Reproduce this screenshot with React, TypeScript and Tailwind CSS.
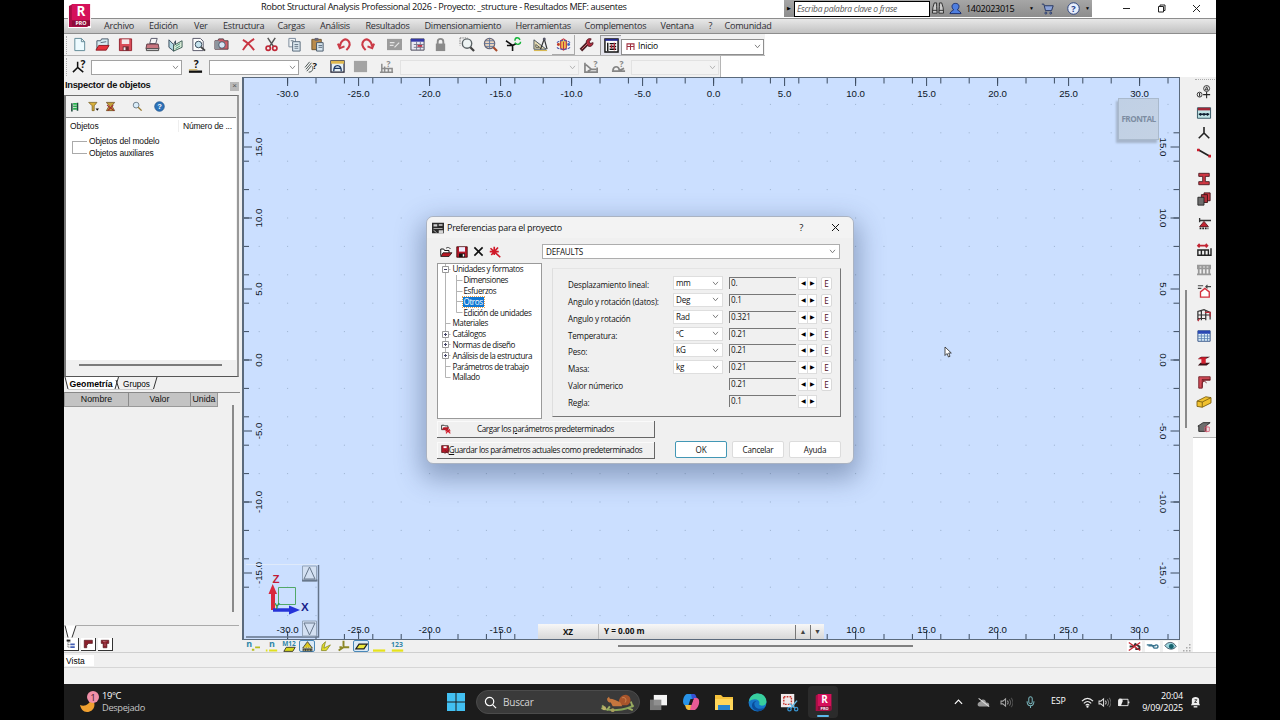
import type { ReactNode } from "react";
import clsx from "clsx";

const icons: Record<string, ReactNode> = {
  fresh: <path d="M3 1.500h7l3.500 3.500v9.500H3z M10 1.500v3.500h3.500" fill="#eefbff" stroke="#5e8795" />,
  open: (
    <>
      <path d="M2 13V4h4l1-2h7v8" fill="#d6ecf2" stroke="#456" />
      <path d="M1 14l3-5h11l-3 5z" fill="#e8323c" stroke="#8a1a22" />
      <path d="M6 6l6-1" stroke="#567" />
    </>
  ),
  save: (
    <>
      <path d="M1.500 2h13v12.500h-13z" fill="#d94c58" stroke="#93222e" />
      <path d="M4 2.500h8v5H4z" fill="#f3e8ea" />
      <path d="M5 10h6.500v4.500H5z" fill="#6d2b34" />
      <path d="M6 11h2v3H6z" fill="#eee" />
    </>
  ),
  print: (
    <>
      <path d="M5 7l1.500-5.500H13L11.500 7z" fill="#f6f6f6" stroke="#556" />
      <path d="M2 7.500h12l1 5H1z" fill="#c87680" stroke="#5b3a42" />
      <path d="M1.500 12.500h13v2h-13z" fill="#e9e3e5" stroke="#444" />
    </>
  ),
  book: (
    <>
      <path d="M1 3l5 5v7L1 11z" fill="#b6dbe6" stroke="#345" />
      <path d="M6 8l2-4v7l-2 4z" fill="#fff" stroke="#345" />
      <path d="M6 15V9l9-5v7z" fill="#e3f2dd" stroke="#365a52" />
      <path d="M8 10l5-3M8 12.500l5-3" stroke="#3a8a74" />
    </>
  ),
  preview: (
    <>
      <path d="M2 1.500h8l3 3v10H2z" fill="#fdfdfd" stroke="#556" />
      <circle cx="8" cy="8" r="3.500" fill="#c6e3ee" stroke="#345" />
      <path d="M10.500 10.500L15 14.500" stroke="#444" strokeWidth="2" />
    </>
  ),
  camera: (
    <>
      <path d="M1 4h3l1-2h5l1 2h4v9H1z" fill="#ce5c65" stroke="#55404a" />
      <path d="M1 4h5v9H1z" fill="#8f959e" />
      <circle cx="8.500" cy="8.500" r="3.500" fill="#d6e5f4" stroke="#456" />
    </>
  ),
  cross: <path d="M2 3c4 2 9 7 12 11M14 2C9 5 5 9 2 14" stroke="#c93643" strokeWidth="2" fill="none" />,
  cut: (
    <>
      <path d="M4 1l6 9M12 1L6 10" stroke="#555" strokeWidth="1.600" />
      <circle cx="4.500" cy="12" r="2.300" fill="none" stroke="#c02838" strokeWidth="1.800" />
      <circle cx="11.500" cy="12" r="2.300" fill="none" stroke="#c02838" strokeWidth="1.800" />
    </>
  ),
  copy: (
    <>
      <path d="M2 1.500h7v9H2z" fill="#f1f4f6" stroke="#789" />
      <path d="M6 5h8v10H6z" fill="#dce8f0" stroke="#567" />
      <path d="M8 8h4M8 10h4M8 12h4M4 4h3" stroke="#678" />
    </>
  ),
  paste: (
    <>
      <path d="M2 2.500h10v11H2z" fill="#b98b4c" stroke="#6b532f" />
      <path d="M5 1h4v3H5z" fill="#667" />
      <path d="M7 6h7v9H7z" fill="#d8e6f0" stroke="#456" />
      <path d="M9 9h4M9 11h4" stroke="#567" />
    </>
  ),
  undo: <path d="M3 10C4 3 9 1 12 4c3 3 1 7-2 10M1 7l2 5 5-2" stroke="#cb3b47" strokeWidth="2.200" fill="none" />,
  redo: <path d="M13 10C12 3 7 1 4 4c-3 3-1 7 2 10M15 7l-2 5-5-2" stroke="#cb3b47" strokeWidth="2.200" fill="none" />,
  grayPage: (
    <>
      <path d="M0 2h16v12H0z" fill="#9c9c9c" />
      <path d="M3 6h5M3 9h4M8 11l5-5" stroke="#e5e5e5" strokeWidth="1.300" />
    </>
  ),
  calc: (
    <>
      <path d="M1 2h14v12H1z" fill="#e9e9f2" stroke="#445" />
      <path d="M1 2h14v3H1z" fill="#3438a8" />
      <path d="M4 8h11M4 11h11M7 5v9M11 5v9" stroke="#77778e" />
      <path d="M8 8.500h5v2H8z" fill="#c0344a" />
    </>
  ),
  lock: (
    <>
      <path d="M5 8V5c0-4 6-4 6 0v3" fill="none" stroke="#8b8b8b" strokeWidth="2" />
      <path d="M3 7h10v8H3z" fill="#8b8b8b" />
    </>
  ),
  lens: (
    <>
      <path d="M0 1h8M0 1v8" stroke="#777" strokeDasharray="1.500 1" />
      <circle cx="7.500" cy="7" r="5" fill="#eef4f4" stroke="#5b6366" strokeWidth="1.500" />
      <path d="M11 11l4 4" stroke="#444" strokeWidth="2.400" />
    </>
  ),
  globe: (
    <>
      <circle cx="7" cy="7" r="5.500" fill="#efd7bf" stroke="#667" strokeWidth="1.300" />
      <path d="M1.500 7h11M7 1.500v11M3 4h8M3 10h8" stroke="#6077a0" />
      <path d="M11 11l4 4" stroke="#a84b2c" strokeWidth="2.200" />
    </>
  ),
  axes: (
    <>
      <path d="M7 15V9M7 9L0 4M7 9H1M7 9l4-2" stroke="#111" strokeWidth="1.700" fill="none" />
      <path d="M9.500 4c0-4 4-4 5.500-1M15.500 5c0 3-4 4-6 1" stroke="#16b53a" strokeWidth="1.500" fill="none" />
    </>
  ),
  design: (
    <>
      <path d="M1 3v10h13z" fill="#e9ddb4" stroke="#44505a" />
      <path d="M3 8v3h4z" fill="#f6f6f6" stroke="#554" />
      <path d="M12 2L8 13M12 2l3 11" stroke="#333" strokeWidth="1.300" />
      <circle cx="12" cy="2" r="1.600" fill="#556" />
      <path d="M1 14h14v1H1z" fill="#d4b13c" />
    </>
  ),
  views: (
    <>
      <circle cx="8" cy="8" r="4.500" fill="#f2c84e" />
      <path d="M5 4l3-2 3 2v8l-3 2-3-2zM8 5v9" stroke="#c03540" strokeWidth="1.200" fill="none" />
      <path d="M1 6c3-3 11-3 14 0M1 11c3 3 11 3 14 0" stroke="#4a52a8" strokeWidth="1.200" strokeDasharray="3 1" fill="none" />
      <circle cx="2.500" cy="8" r="1.500" fill="#c0392b" />
      <circle cx="13.500" cy="8" r="1.500" fill="#3b68c7" />
    </>
  ),
  wrench: (
    <>
      <path d="M2 14L10 6" stroke="#4d2026" strokeWidth="4" />
      <path d="M8 7c-1-4 2-6 5-5l-2 3 1 2 3-1c0 4-4 5-6 3z" fill="#b22a3b" stroke="#571e28" />
      <path d="M3 13l6-6" stroke="#d76d77" />
    </>
  ),
  inspector: (
    <>
      <path d="M1 1h14v14H1z" fill="#fff" stroke="#111" strokeWidth="1.500" />
      <path d="M1 1h14v2H1z" fill="#22268c" />
      <path d="M4 5v9M6 6h7M6 9h7M6 12h7" stroke="#111" strokeWidth="1.500" />
      <path d="M8 7v4M11 5v8" stroke="#b22a3b" strokeWidth="1.500" />
    </>
  ),
  nodeAsk: (
    <>
      <path d="M6 3v6M6 9l-5 5M6 9l6 5" stroke="#111" strokeWidth="1.600" />
      <text x="9" y="10" fontSize="11" fontWeight="700" fill="#111">?</text>
    </>
  ),
  barAsk: (
    <>
      <path d="M1 13.500h14" stroke="#111" strokeWidth="2.500" />
      <path d="M1 11.500h9" stroke="#c9a23a" />
      <text x="6" y="10" fontSize="11" fontWeight="700" fill="#111">?</text>
    </>
  ),
  handAsk: (
    <>
      <path d="M1 9l5-6M2 11l6-7M3 13l5-6M5 14c4 0 5-3 4-6" stroke="#3f4b49" fill="none" />
      <text x="9" y="11" fontSize="10" fontWeight="700" fill="#111">?</text>
    </>
  ),
  frameBox: (
    <>
      <path d="M1 2h14v12H1z" fill="#e6f0f5" stroke="#223" strokeWidth="1.300" />
      <path d="M1 2h14v3H1z" fill="#e0b84e" />
      <path d="M4 13c0-8 8-8 8 0M4 10h8" fill="none" stroke="#1d3864" strokeWidth="1.400" />
    </>
  ),
  grayBox: <path d="M1 2h14v12H1z" fill="#a3a3a3" />,
  loadAsk: (
    <>
      <path d="M1 14h14M3 5v9M6 8v6M3 10h11v4M10 10v4" stroke="#8c8c8c" strokeWidth="1.600" fill="none" />
      <text x="8" y="8" fontSize="9" fontWeight="700" fill="#8c8c8c">?</text>
    </>
  ),
  caseAsk: (
    <>
      <path d="M1 4v10h13V9M2 6l6 5h5M4 13l4-2" stroke="#858585" strokeWidth="1.800" fill="none" />
      <text x="10" y="8" fontSize="9" fontWeight="700" fill="#858585">?</text>
    </>
  ),
  archAsk: (
    <>
      <path d="M1 13h14M2 12c1-5 6-5 7 0M9 12l5-2" stroke="#858585" strokeWidth="1.800" fill="none" />
      <text x="9" y="8" fontSize="9" fontWeight="700" fill="#858585">?</text>
    </>
  ),
  bars: (
    <>
      <path d="M3 2v13M12 1v13" stroke="#1d4a3c" strokeWidth="2.500" />
      <path d="M5 3h6M5 7h6M5 11h6" stroke="#25b04b" strokeWidth="2.500" />
    </>
  ),
  filter: (
    <>
      <path d="M1 2h12l-4 5v7H6V7z" fill="#d7b03c" stroke="#6c5316" />
      <path d="M11 11h5l-2.500 3z" fill="#111" />
    </>
  ),
  filterOff: (
    <>
      <path d="M2 2h12l-4 5 4 7H2l4-7z" fill="#c7a13a" stroke="#5d4114" />
      <path d="M3 6l10 8M12 6L4 14" stroke="#a02530" strokeWidth="1.500" />
    </>
  ),
  find: (
    <>
      <circle cx="6" cy="6" r="4.200" fill="#d9ecf8" stroke="#667785" strokeWidth="1.300" />
      <path d="M9 9l5 5" stroke="#9a7a30" strokeWidth="2" />
    </>
  ),
  info: (
    <>
      <circle cx="8" cy="8" r="7" fill="#2d73ba" stroke="#1f4f85" />
      <text x="8" y="12" fontSize="11" fontWeight="700" textAnchor="middle" fill="#fff">?</text>
    </>
  ),
  tree: (
    <>
      <path d="M3 1v12M3 5h4M3 9h4M3 13h4" stroke="#333" strokeDasharray="1.500 1" />
      <path d="M7 7h7v3H7zM7 11.500h7v3H7z" fill="#4560b5" />
      <path d="M1 1h6v3H1z" fill="#222" />
    </>
  ),
  flag: <path d="M2 2h13v5H9l-3 3v4H2z" fill="#8a1f2b" stroke="#4c1118" />,
  section: (
    <>
      <path d="M2 2h12v5h-3v7H5V7H2z" fill="#8a1f2b" stroke="#4c1118" />
      <path d="M5 4h6M8 6v5" stroke="#eac5c8" strokeDasharray="1 1" />
    </>
  ),
  axisNum: (
    <>
      <circle cx="3" cy="11" r="2.800" fill="none" stroke="#222" />
      <path d="M3 9v4M11 8v7M7 11h8" stroke="#222" strokeWidth="1.200" />
      <circle cx="11" cy="4" r="3.400" fill="none" stroke="#222" />
      <path d="M9.500 5.500L11 2l1.500 3.500z" stroke="#222" fill="none" />
    </>
  ),
  storey: (
    <>
      <path d="M.5 2h15v12H.5z" fill="#bfe4e6" stroke="#264a58" />
      <path d="M1 2h14v3H1z" fill="#a22636" />
      <path d="M2 9.500h12M4 8v3M8 8v3M12 8v3" stroke="#123" strokeWidth="1.600" />
    </>
  ),
  node: <path d="M8 1v7M8 8l-6 6M8 8l6 6" stroke="#222" strokeWidth="1.800" fill="none" />,
  bar: (
    <>
      <path d="M1 4l14 8" stroke="#222" strokeWidth="2" />
      <path d="M0 3h3v3H0zM13 10h3v3h-3z" fill="#d01c2c" />
    </>
  ),
  ibeam: <path d="M2 1.500h12v3.500H9.500v6H14v3.500H2V11h4.500V5H2z" fill="#cf3743" stroke="#4a1c22" />,
  solids: (
    <>
      <path d="M8 1h7v9H8z" fill="#cf3743" stroke="#3c1015" />
      <path d="M5 3h7v9H5z" fill="#b02e3a" stroke="#3c1015" />
      <path d="M1 6h7v9H1z" fill="#6d6d6d" stroke="#222" />
    </>
  ),
  support: (
    <>
      <path d="M3 4h13M3 1v5" stroke="#333" strokeWidth="1.500" />
      <path d="M8 5l5 6H3z" fill="#c22432" stroke="#58131b" />
      <path d="M3 13h10" stroke="#222" strokeWidth="2" strokeDasharray="2 1" />
    </>
  ),
  loads: (
    <>
      <path d="M1 3h11M3 1L1 3l2 2M10 1l2 2-2 2" stroke="#c22432" strokeWidth="1.800" />
      <path d="M1 8h12v6H1zM5 8v6M9 8v6M1 14h15V6" fill="none" stroke="#222" strokeWidth="1.600" />
    </>
  ),
  grayLoads: <path d="M1 3h14v3H1zM2 3v9M6 3v9M10 3v9M14 3v9M0 13h16" fill="none" stroke="#999" strokeWidth="2" />,
  wind: (
    <>
      <path d="M4 15V9l5-4 5 4v6z" fill="#fff" stroke="#d3303d" strokeWidth="1.500" />
      <path d="M1 2h6M1 5h4M10 3h6M12 1l-2 2 2 2" stroke="#444" strokeWidth="1.200" fill="none" />
    </>
  ),
  frames: (
    <>
      <path d="M1 14V4l7-2 7 3v8M1 8h14M1 12h9M5 3v11M10 3v11" stroke="#333" strokeWidth="1.400" fill="none" />
      <path d="M9 5h6v5M1 15l2-3" stroke="#bb2b38" strokeWidth="1.400" fill="none" />
    </>
  ),
  table: (
    <>
      <path d="M1 2h14v12H1z" fill="#dff1fb" stroke="#25467b" />
      <path d="M1 2h14v3.500H1z" fill="#2a49b5" />
      <path d="M1 8h14M1 11h14M5 5v9M8.500 5v9M12 5v9" stroke="#5b83b5" />
    </>
  ),
  steel: (
    <>
      <path d="M1 5l4-2h10l-4 2zM1 13l3-3h11l-4 3z" fill="#3c1218" />
      <path d="M5 4h5v7H5z" fill="#d3202f" />
      <path d="M1 6l3-2h8l-3 2z" fill="#c91c2b" />
    </>
  ),
  joint: (
    <>
      <path d="M2 2h13v4H9L6 9v6H2z" fill="#d34c58" stroke="#6a1a22" />
      <path d="M6 5l5 4M6 5h9M6 5v9" stroke="#6a1a22" />
    </>
  ),
  timber: (
    <>
      <path d="M0 7l10-5 6 1v6L6 14l-6-1z" fill="#f0c12f" stroke="#7b5f10" />
      <path d="M0 7l6 1 10-5M6 8v6" stroke="#7b5f10" fill="none" />
    </>
  ),
  concrete: (
    <>
      <path d="M1 7l6-4h8l-5 4v6H2V7z" fill="#6e6e6e" stroke="#222" />
      <path d="M9 8h5v5H9zM11 6v8" stroke="#d25e74" fill="none" />
    </>
  ),
  nDash: (
    <>
      <text x="-1" y="9" fontSize="11" fontWeight="700" fill="#2f86a8">n</text>
      <path d="M6 12h3M10 9h6" stroke="#b8bd20" strokeWidth="2.200" />
    </>
  ),
  nBar: (
    <>
      <text x="5" y="9" fontSize="11" fontWeight="700" fill="#2f86a8">n</text>
      <path d="M1 13h2M5 13h10" stroke="#e0e020" strokeWidth="2.400" />
    </>
  ),
  plate: (
    <>
      <text x="-1" y="7" fontSize="8" fontWeight="700" fill="#2f86a8">M12</text>
      <path d="M4 9h11l-3 5H1z" fill="#d7d81c" stroke="#222" />
    </>
  ),
  cone: (
    <>
      <path d="M8 2l6 8H2z" fill="#d9c51f" stroke="#333" />
      <path d="M2 11h12v3H2z" fill="#333" />
      <path d="M4 9h8M3 12.500h10" stroke="#f5f09a" strokeDasharray="2 1" />
    </>
  ),
  leaf: <path d="M3 13l1-7 4-4-2 8 8-4-5 7z" fill="#e3de2b" stroke="#8a8a22" />,
  axis3: <path d="M8 1v8l-6 4M8 9h7M3 9h3" stroke="#8c8726" strokeWidth="2.400" fill="none" />,
  flat: <path d="M5 5h10l-4 6H1z" fill="#ece83a" stroke="#222" strokeWidth="1.500" />,
  yellowLine: <path d="M0 13h15" stroke="#e6e21c" strokeWidth="2.800" />,
  digits: (
    <>
      <text x="0" y="8" fontSize="8.500" fontWeight="700" fill="#2f86a8">123</text>
      <path d="M1 13h14" stroke="#e6e21c" strokeWidth="2.800" />
    </>
  ),
  hidden: (
    <>
      <path d="M2 8h5l2-3 5 3v3H9" stroke="#333" strokeWidth="2.400" fill="none" />
      <path d="M1 3l14 10M1 13L15 3" stroke="#c62835" strokeWidth="1.600" />
    </>
  ),
  glasses: <path d="M1 6h6l3 4h3a2 2 0 1 0-2-3H3" stroke="#3a7590" strokeWidth="1.800" fill="none" />,
  eye: (
    <>
      <path d="M1 7c4-6 11-5 14 1-3 4-9 5-14-1z" fill="#9ed6de" stroke="#345" />
      <circle cx="9" cy="8" r="3" fill="#17626e" />
    </>
  ),
  dlgOpen: (
    <>
      <path d="M1 13V4h4l1 2h6v3" fill="#fff" stroke="#111" strokeWidth="1.300" />
      <path d="M1 14l3-5h12l-4 5z" fill="#b51824" stroke="#111" />
      <path d="M8 3c2-2 5-1 6 1" stroke="#111" fill="none" />
    </>
  ),
  dlgSave: (
    <>
      <path d="M1 1h14v14H1z" fill="#b5182a" stroke="#300" />
      <path d="M4 1.500h8v6H4z" fill="#eef" />
      <path d="M4 10h8v5H4z" fill="#111" />
      <path d="M9 11h2v3H9z" fill="#fff" />
    </>
  ),
  dlgX: <path d="M2 2l12 12M14 2L2 14" stroke="#111" strokeWidth="2.400" />,
  dlgStar: <path d="M2 3l13 12M12 2L3 12M1 7.500h12M7 1v11" stroke="#d01828" strokeWidth="2.200" />,
  dlgLoad: (
    <>
      <path d="M1 9V2h4l1 1h5v6z" fill="#fff" stroke="#111" strokeWidth="1.300" />
      <path d="M1 9l3-4h9l-2 4z" fill="#b51824" />
      <path d="M7 8l8 7M14 8l-6 7M7 11h8" stroke="#d01828" strokeWidth="1.700" />
    </>
  ),
  dlgStore: (
    <>
      <path d="M1 1h11v11H1z" fill="#b5182a" stroke="#300" />
      <path d="M4 2h5v3H4z" fill="#fff" />
      <path d="M6 8l6 6M12 8l-6 6" stroke="#7a1420" strokeWidth="1.500" />
    </>
  ),
  dlgApp: (
    <>
      <path d="M0 1h16v14H0z" fill="#2b2b2b" />
      <path d="M2 3h5v3H2zM9 3h5v2H9zM2 8h12v1H2zM9 11h6v4H9z" fill="#d4d4d4" />
      <path d="M2 11l4 3" stroke="#ddd" />
    </>
  ),
};

function Icon({ name, className = "size-4" }: { name: string; className?: string }) {
  return (
    <svg viewBox="0 0 16 16" fill="none" className={clsx("shrink-0 overflow-visible", className)}>
      {icons[name]}
    </svg>
  );
}

function Chevron({ className }: { className?: string }) {
  return (
    <svg viewBox="0 0 8 6" className={clsx("w-[7px] h-[5px] shrink-0", className)} fill="none">
      <path d="M1 1l3 3.500L7 1" stroke="currentColor" strokeWidth="1" />
    </svg>
  );
}

function RobotLogo({ className }: { className?: string }) {
  return (
    <svg viewBox="0 0 24 26" className={className}>
      <path d="M1 3l4-2h18v21l-3 3H1z" fill="#a80f45" />
      <path d="M4 1h19v23H4z" fill="#d5115a" />
      <path d="M4 18h19v6H4z" fill="#8d0d3a" />
      <text x="13.500" y="14" fontSize="14" fontWeight="700" textAnchor="middle" fill="#fff">R</text>
      <text x="13.500" y="23.300" fontSize="5.500" fontWeight="700" textAnchor="middle" fill="#fff">PRO</text>
    </svg>
  );
}

const menus = [
  { label: "Archivo", width: "w-[45px]" },
  { label: "Edición", width: "w-[45px]" },
  { label: "Ver", width: "w-[29px]" },
  { label: "Estructura", width: "w-[54.500px]" },
  { label: "Cargas", width: "w-[42.500px]" },
  { label: "Análisis", width: "w-[45.500px]" },
  { label: "Resultados", width: "w-[59px]" },
  { label: "Dimensionamiento", width: "w-[91px]" },
  { label: "Herramientas", width: "w-[69px]" },
  { label: "Complementos", width: "w-[76px]" },
  { label: "Ventana", width: "w-[48px]" },
  { label: "?", width: "w-[16px]" },
  { label: "Comunidad", width: "w-[60px]" },
];

function TitleBar() {
  return (
    <header className="relative flex h-[18px] bg-white">
      <RobotLogo className="absolute left-[4px] top-[3px] z-10 w-[23px] h-[25px] bg-white" />
      <h1 className="w-[720px] pl-[197px] pt-px text-[9.200px] leading-[12px] tracking-[-0.350px] whitespace-nowrap text-[#111]">
        Robot Structural Analysis Professional 2026 - Proyecto: _structure - Resultados MEF: ausentes
      </h1>
      <div className="flex w-[308px] h-[17px] items-center bg-linear-to-b from-[#a6a6a6] to-[#8d8d8d]">
        <span className="w-[10px] pl-[3px] text-[5px]">▶</span>
        <div className="w-[136px] h-[16px] border border-black bg-white pl-[2px] text-[8.500px] leading-[13px] tracking-[-0.280px] italic text-[#555] whitespace-nowrap">
          Escriba palabra clave o frase
        </div>
        <svg viewBox="0 0 14 14" className="ml-px w-[14px] h-[13px]" fill="#ccc" stroke="#2a2a2a">
          <path d="M3 1h2.500v4L6 12H1l.5-6zM8.500 1H11l1.500 5 .5 6H8l.5-7zM1 9h5M8 9h5" />
        </svg>
        <svg viewBox="0 0 14 14" className="ml-[4px] w-[13px] h-[13px]" fill="#4f7fe0" stroke="#14296b">
          <path d="M1 12.500c1-3 3-3 4-4-3-3-2-7 2-7s5 4 2 7c1 1 3 1 4 4z" />
        </svg>
        <span className="ml-[4px] w-[60px] text-[9px] tracking-[-0.300px] text-black">1402023015</span>
        <span className="w-[20px] pl-[3px] text-[5px]">▼</span>
        <svg viewBox="0 0 16 14" className="-ml-[5px] w-[13px] h-[12px]" fill="#8ba2d8" stroke="#263561" strokeWidth="1.200">
          <path d="M1 1h2.500l2 8H13l2-6H4.500" />
          <circle cx="6" cy="12" r="1.200" />
          <circle cx="12" cy="12" r="1.200" />
        </svg>
        <svg viewBox="0 0 14 14" className="ml-[13px] w-[13px] h-[13px]">
          <circle cx="7" cy="7" r="6.200" fill="#e8eefb" stroke="#273f7c" />
          <text x="7" y="10.500" fontSize="10" fontWeight="700" textAnchor="middle" fill="#21418f">?</text>
        </svg>
        <span className="pl-[5px] text-[5px]">▼</span>
      </div>
      <svg viewBox="0 0 124 17" className="w-[124px] h-[17px]" fill="none" stroke="#222" strokeWidth="1">
        <path d="M31 8.500h7M101 5l7 7M108 5l-7 7" />
        <path d="M66.500 6.500h5v5.500h-5zM68 6.500V5h5v5.500h-1.500" />
      </svg>
    </header>
  );
}

function MenuBar() {
  return (
    <nav className="flex h-[16px] items-center border-y border-[#8d8d8d] bg-linear-to-b from-[#e8e8e8] to-[#c2c2c2] pl-[40px] text-[9.100px] leading-[14px] tracking-[-0.250px] text-[#2d2d33]">
      {menus.map((menu) => (
        <span key={menu.label} className={clsx("shrink-0 whitespace-nowrap", menu.width)}>
          {menu.label}
        </span>
      ))}
    </nav>
  );
}

const mainTools = [
  ["fresh", "open", "save"],
  ["print", "book", "preview", "camera"],
  ["cross", "cut", "copy", "paste"],
  ["undo", "redo"],
  ["grayPage", "calc", "lock"],
  ["lens", "globe", "axes"],
  ["design", "views", "wrench"],
];

function ToolCell({ name, className }: { name: string; className: string }) {
  return (
    <span className={clsx("flex shrink-0 items-center justify-center", className)}>
      <Icon name={name} className="size-[15px]" />
    </span>
  );
}

function MainToolbar() {
  return (
    <div className="flex h-[22px] w-[701px] items-center border-b border-[#b5b5b5] bg-[#f1f1f1]">
      <div className="h-[18px] w-[4px] shrink-0 border-l border-dotted border-[#aaa] ml-[2px] -mr-[2px]" />
      <div className="flex gap-[4px]">
        {mainTools.map((group) => (
          <div key={group[0]} className="flex">
            {group.map((name) => (
              <ToolCell
                key={name}
                name={name}
                className={clsx("w-[23px] h-[20px]", name === "views" && "border-r border-b border-[#aaa]")}
              />
            ))}
          </div>
        ))}
      </div>
      <ToolCell name="inspector" className="ml-[2px] w-[21px] h-[20px] border-t border-l border-[#999] bg-[#e4e4ec]" />
      <div className="mt-[4px] flex h-[16px] w-[143px] items-center border border-[#8f8f8f] bg-white pl-[4px] pr-[2px]">
        <svg viewBox="0 0 10 8" className="w-[9px] h-[7px]" stroke="#a03040" fill="none" strokeWidth="1.200">
          <path d="M1 8V1h8v7M5 1v7M1 4h8" />
        </svg>
        <span className="ml-[3px] flex-1 text-[8.500px] tracking-[-0.200px] text-black">Inicio</span>
        <Chevron className="text-[#666]" />
      </div>
    </div>
  );
}

function ToolbarSelect({ className, disabled }: { className: string; disabled?: boolean }) {
  return (
    <div
      className={clsx(
        "flex h-[15px] shrink-0 items-center justify-end border pr-[2px]",
        disabled ? "border-[#e2e2e2] bg-[#f3f3f3] text-[#aaa]" : "border-[#a2a2a2] bg-white text-[#777]",
        className,
      )}
    >
      <Chevron />
    </div>
  );
}

function SelectionToolbar() {
  return (
    <div className="flex h-[21px] w-[657px] items-center border-r border-[#b5b5b5] bg-[#f1f1f1]">
      <div className="h-[18px] w-[2px] ml-[2px] border-l border-dotted border-[#aaa]" />
      <ToolCell name="nodeAsk" className="w-[23px] h-[18px]" />
      <ToolbarSelect className="w-[91px] mt-[2px]" />
      <ToolCell name="barAsk" className="w-[27px] h-[18px]" />
      <ToolbarSelect className="w-[90px] mt-[2px]" />
      <ToolCell name="handAsk" className="w-[25px] h-[18px]" />
      <ToolCell name="frameBox" className="w-[27px] h-[18px]" />
      <ToolCell name="grayBox" className="w-[18px] h-[18px]" />
      <ToolCell name="loadAsk" className="w-[31px] h-[18px] pl-[4px]" />
      <ToolbarSelect className="w-[179px] mt-[2px]" disabled />
      <ToolCell name="caseAsk" className="w-[24px] h-[18px]" />
      <ToolCell name="archAsk" className="w-[28px] h-[18px] pl-[2px]" />
      <ToolbarSelect className="w-[88px] mt-[2px]" disabled />
    </div>
  );
}

function ObjectInspector() {
  return (
    <aside className="flex w-[178px] shrink-0 flex-col bg-[#f0f0f0] font-['Liberation_Sans'] text-[9.300px] text-[#111]">
      <div className="flex h-[17px] items-center justify-between pl-[1px] pr-[3px] pt-px">
        <h2 className="text-[9.300px] font-bold tracking-[-0.270px] whitespace-nowrap">Inspector de objetos</h2>
        <span className="flex size-[9px] items-center justify-center bg-[#b9b9b9] text-[8px] leading-none text-[#555]">×</span>
      </div>
      <div className="mt-[1px] flex h-[282px] w-[175px] flex-col border border-l-2 border-r-2 border-l-[#777] border-t-[#6d6d6d] border-r-[#999] border-b-[#555]">
        <div className="flex h-[21px] items-center pl-[1px]">
          <Icon name="bars" className="ml-[3px] size-[10px]" />
          <Icon name="filter" className="ml-[8px] size-[11px]" />
          <Icon name="filterOff" className="ml-[6px] size-[11px]" />
          <Icon name="find" className="ml-[16px] size-[11px]" />
          <Icon name="info" className="ml-[11px] size-[11px]" />
        </div>
        <div className="h-[243px] w-[170px] border-t border-[#888] bg-white">
          <div className="-mt-px flex h-[18px] items-center pl-[4px] text-[8.500px]">
            <span className="w-[109px] border-r border-[#eee] tracking-[-0.100px]">Objetos</span>
            <span className="ml-[4px] whitespace-nowrap tracking-[-0.200px]">Número de ...</span>
          </div>
          <div className="flex text-[8.500px] tracking-[-0.160px] leading-[12px]">
            <span className="ml-[6px] mt-[6px] h-[13px] w-[15px] border border-r-0 border-[#aaa]" />
            <span className="ml-[2px] whitespace-nowrap">
              Objetos del modelo
              <br />
              Objetos auxiliares
            </span>
          </div>
        </div>
        <div className="ml-[13px] mt-[4px] h-[2px] w-[143px] bg-[#7b7b7b]" />
      </div>
      <div className="flex h-[16px] items-start">
        <svg viewBox="0 0 176 16" className="w-[176px] h-[16px] font-['Liberation_Sans']">
          <path d="M1 0l3 12h47L54.500 0z" fill="#fff" />
          <path d="M1 0l3 12M54.500 0L51 12M52 3l3 9M93 0l-3.500 12" stroke="#333" fill="none" />
          <path d="M4 12.500h85" stroke="#ccc" fill="none" />
          <path d="M0 15.500h176" stroke="#888" fill="none" />
          <text x="5.500" y="9.500" fontSize="9.300" fontWeight="700" textLength="43" lengthAdjust="spacingAndGlyphs">Geometría</text>
          <text x="59" y="9.500" fontSize="9.300" textLength="27" lengthAdjust="spacingAndGlyphs">Grupos</text>
        </svg>
      </div>
      <div className="flex h-[232px]">
        <div className="flex h-[14px] w-[154px] items-center border border-t-0 border-[#999] bg-[#c3c3c3] text-center text-[8.800px]">
          <span className="w-[64px] border-r border-[#8b8b8b]">Nombre</span>
          <span className="w-[62px] border-r border-[#8b8b8b]">Valor</span>
          <span className="w-[26px]">Unida</span>
        </div>
        <div className="ml-[14px] mt-[12px] h-[207px] w-[2px] bg-[#8a8a8a]" />
      </div>
      <svg viewBox="0 0 176 13" className="w-[176px] h-[13px]" fill="none">
        <path d="M1 .5l3 12h4L12 .5z" fill="#fff" />
        <path d="M1 .5l3 12M8 12.500L12 .5" stroke="#333" />
        <path d="M12 .500h163" stroke="#aaa" />
      </svg>
      <div className="flex gap-[2px]">
        {["tree", "flag", "section"].map((name) => (
          <span key={name} className="flex h-[13px] w-[15px] items-center justify-center border-r border-b border-[#333] bg-white">
            <Icon name={name} className="size-[10px]" />
          </span>
        ))}
      </div>
    </aside>
  );
}

const SCALE = 14.2;
const ORIGIN_X = 469.6;
const ORIGIN_Y = 282;
const WIDTH = 935;
const HEIGHT = 561;

const even = Array.from({ length: 33 }, (_, i) => (i - 16) * 2);
const evenY = even.filter((v) => Math.abs(v) <= 18);
const majorX = Array.from({ length: 13 }, (_, i) => (i - 6) * 5);
const majorY = Array.from({ length: 7 }, (_, i) => (i - 3) * 5);

// the work plane bar hides this part of the lower ruler
const lowerX = majorX.filter((v) => v < -10 || v > 5);

const xAt = (v: number) => ORIGIN_X + v * SCALE;
const yAt = (v: number) => ORIGIN_Y - v * SCALE;

function Ruler() {
  return (
    <svg viewBox="0 0 935 561" className="block w-[935px] h-[561px] font-['Liberation_Sans']" fontSize="9.700" fill="#0c1626">
      <g fill="#8da3bd">
        {even.map((x) => evenY.map((y) => <rect key={`${x}/${y}`} x={xAt(x) - 0.5} y={yAt(y) - 0.5} width="1" height="1" opacity="0.75" />))}
      </g>
      <g stroke="#3c4c60" strokeWidth="1">
        {even.slice(1).map((v) => (
          <path key={v} d={`M${xAt(v)} 0v5.500M${xAt(v)} ${HEIGHT}v-5`} />
        ))}
        {majorX.map((v) => (
          <path key={v} d={`M${xAt(v)} 0v8M${xAt(v)} ${HEIGHT}v-8`} />
        ))}
        {evenY.slice(1, -1).map((v) => (
          <path key={v} d={`M0 ${yAt(v)}h5M${WIDTH} ${yAt(v)}h-5.500`} />
        ))}
        {majorY.map((v) => (
          <path key={v} d={`M0 ${yAt(v)}h8M${WIDTH} ${yAt(v)}h-8.500`} />
        ))}
      </g>
      <g textAnchor="middle">
        {majorX.map((v) => (
          <text key={v} x={xAt(v)} y="19">{v.toFixed(1)}</text>
        ))}
        {lowerX.map((v) => (
          <text key={v} x={xAt(v)} y="555">{v.toFixed(1)}</text>
        ))}
        {majorY.map((v) => (
          <text key={v} transform={`translate(18 ${yAt(v)}) rotate(-90)`}>{v.toFixed(1)}</text>
        ))}
        {majorY.map((v) => (
          <text key={v} transform={`translate(915.500 ${yAt(v)}) rotate(90)`}>{v.toFixed(1)}</text>
        ))}
      </g>
    </svg>
  );
}

function AxisWidget() {
  return (
    <svg viewBox="0 0 76 76" className="absolute bottom-0 left-0 w-[76px] h-[76px] font-['Liberation_Sans']">
      <path d="M2 1.500h72" stroke="#dfeafa" fill="none" />
      <path d="M74.500 2v72H2" stroke="#64748a" strokeWidth="1.500" fill="none" />
      <g fill="#d3e0f2" stroke="#68788c" strokeWidth="1">
        <path d="M58.500 3h14v15h-14zM58.500 58h14v15h-14z" stroke="#93a4b9" />
        <path d="M60 16l5.500-12L71 16zM60 60l5.500 12L71 60z" />
        <path d="M58 17.500h15.500" strokeWidth="2" />
      </g>
      <path d="M34.500 24.500h17v17h-17z" fill="none" stroke="#52a868" />
      <path d="M29 47V28" stroke="#d8283c" strokeWidth="4" />
      <path d="M24.500 31L28.700 21l4.300 10z" fill="#d8283c" />
      <path d="M29 47h17" stroke="#2633d8" strokeWidth="3.500" />
      <path d="M45 42.500l11 4.500-11 4.500z" fill="#2633d8" />
      <text x="28.500" y="20" fontSize="11.500" fontWeight="700" fill="#c11a36">Z</text>
      <text x="57" y="47.500" fontSize="11.500" fontWeight="700" fill="#181d8c">X</text>
      <text x="30" y="46" fontSize="9" fontWeight="700" fill="#2c8c38">Y</text>
    </svg>
  );
}

function Viewport() {
  return (
    <main className="relative h-[563px] w-[938px] overflow-hidden border-t border-l-2 border-r border-b border-[#5b6a7c] bg-[#cbdfff]">
      <Ruler />
      <AxisWidget />
      <div className="absolute left-[874px] top-[20px] flex h-[42px] w-[41px] items-center justify-center border border-[#a9b9cc] bg-linear-to-br from-[#c0d0e5] to-[#c4d2e4] shadow-[-2px_3px_2px_#a5b5cb]">
        <span className="text-[8.200px] font-bold tracking-[-0.550px] text-[#7d8da2]">FRONTAL</span>
      </div>
      <div className="absolute bottom-0 left-[294px] flex h-[15px] w-[286px] items-center bg-linear-to-b from-[#f7f7f7] to-[#d8d8d8] text-[8.200px] font-bold text-[#111]">
        <span className="w-[61px] border-r border-[#bbb] text-center leading-[15px]">XZ</span>
        <span className="w-[196px] pl-[5px]">Y = 0.00 m</span>
        <span className="w-[15px] border-l border-[#777] text-center text-[7px] leading-[14px] text-[#444]">▲</span>
        <span className="w-[14px] border-l border-[#777] text-center text-[7px] leading-[14px] text-[#444]">▼</span>
      </div>
    </main>
  );
}

const viewTools = ["nDash", "nBar", "plate", "cone", "leaf", "axis3", "flat", "yellowLine", "digits"];

function ViewportFooter() {
  return (
    <div className="flex h-[13px] items-center bg-[#f0f0f0] pl-[3px]">
      {viewTools.map((name) => (
        <span
          key={name}
          className={clsx(
            "flex h-[12px] w-[16px] mr-[2px] items-center justify-center",
            (name === "cone" || name === "flat") && "rounded-xs border border-[#4a88b8] bg-[#dbeaf6]",
          )}
        >
          <Icon name={name} className="w-[15px] h-[13px]" />
        </span>
      ))}
      <div className="ml-[211px] h-[2px] w-[295px] bg-[#808080]" />
      <div className="ml-[214px] flex gap-[3px]">
        {["hidden", "glasses", "eye"].map((name) => (
          <span key={name} className="flex h-[11px] w-[15px] items-center justify-center bg-white">
            <Icon name={name} className="w-[15px] h-[13px]" />
          </span>
        ))}
      </div>
      <svg viewBox="0 0 8 8" className="ml-[5px] mt-[3px] size-[8px]" fill="#aaa">
        <path d="M6 0h1.500v1.500H6zM3 3h1.500v1.500H3zM6 3h1.500v1.500H6zM0 6h1.500v1.500H0zM3 6h1.500v1.500H3zM6 6h1.500v1.500H6z" />
      </svg>
    </div>
  );
}

const sideTools = [
  { name: "axisNum", gap: "mt-[5px]" },
  { name: "storey", gap: "mt-[7px]" },
  { name: "node", gap: "mt-[6px]" },
  { name: "bar", gap: "mt-[6px]" },
  { name: "ibeam", gap: "mt-[12px]" },
  { name: "solids", gap: "mt-[6px]" },
  { name: "support", gap: "mt-[11px]" },
  { name: "loads", gap: "mt-[12px]" },
  { name: "grayLoads", gap: "mt-[6px]" },
  { name: "wind", gap: "mt-[7px]" },
  { name: "frames", gap: "mt-[10px]" },
  { name: "table", gap: "mt-[7px]" },
  { name: "steel", gap: "mt-[11px]" },
  { name: "joint", gap: "mt-[7px]" },
  { name: "timber", gap: "mt-[6px]" },
  { name: "concrete", gap: "mt-[11px]" },
];

function SideToolbar() {
  return (
    <div className="flex h-[361px] w-[23px] flex-col items-center border-b border-[#b5b5b5] bg-[#f0f0f0]">
      <div className="mt-[2px] w-[20px] border-t border-dotted border-[#aaa]" />
      {sideTools.map((tool) => (
        <Icon key={tool.name} name={tool.name} className={clsx("size-[14px] -ml-px", tool.gap)} />
      ))}
    </div>
  );
}

const treeItems = [
  { label: "Unidades y formatos", depth: 0, toggle: "-" },
  { label: "Dimensiones", depth: 1 },
  { label: "Esfuerzos", depth: 1 },
  { label: "Otros", depth: 1, selected: true },
  { label: "Edición de unidades", depth: 1 },
  { label: "Materiales", depth: 0 },
  { label: "Catálogos", depth: 0, toggle: "+" },
  { label: "Normas de diseño", depth: 0, toggle: "+" },
  { label: "Análisis de la estructura", depth: 0, toggle: "+" },
  { label: "Parámetros de trabajo", depth: 0 },
  { label: "Mallado", depth: 0 },
];

const settings = [
  { label: "Desplazamiento lineal:", unit: "mm", value: "0." },
  { label: "Angulo y rotación (datos):", unit: "Deg", value: "0.1" },
  { label: "Angulo y rotación", unit: "Rad", value: "0.321" },
  { label: "Temperatura:", unit: "ºC", value: "0.21" },
  { label: "Peso:", unit: "kG", value: "0.21" },
  { label: "Masa:", unit: "kg", value: "0.21" },
  { label: "Valor númerico", value: "0.21" },
  { label: "Regla:", value: "0.1", plain: true },
];

function SettingsTree() {
  return (
    <div className="h-[156px] w-[105px] border border-[#9a9a9a] bg-white">
      {treeItems.map((item) => (
        <div key={item.label} className="flex h-[10.800px] items-center">
          <svg viewBox="0 0 10 11" className="ml-[3px] w-[10px] h-[11px] shrink-0" fill="none" stroke="#b4b4b4">
            <path d={item.label === "Mallado" ? "M4.500 0v5.500h5" : item.depth ? "M4.500 0v11" : "M4.500 0v11M4.500 5.500h5"} />
            {item.toggle && (
              <>
                <path d="M1.500 2.500h6v6h-6z" fill="#fff" stroke="#999" />
                <path d={item.toggle === "+" ? "M3 5.500h3M4.500 4v3" : "M3 5.500h3"} stroke="#446" />
              </>
            )}
          </svg>
          {item.depth === 1 && (
            <svg viewBox="0 0 12 11" className="-mr-px w-[12px] h-[11px] shrink-0" fill="none" stroke="#b4b4b4">
              <path d={item.label === "Edición de unidades" ? "M5.500 0v5.500h6" : "M5.500 0v11M5.500 5.500h6"} />
            </svg>
          )}
          <span
            className={clsx(
              "ml-[0.500px] whitespace-nowrap px-px leading-[10px]",
              item.selected && "bg-[#0f78d4] text-white outline-1 outline-dotted outline-[#e8a04c]",
            )}
          >
            {item.label}
          </span>
        </div>
      ))}
    </div>
  );
}

function SettingsRow({ label, unit, value, plain }: { label: string; unit?: string; value: string; plain?: boolean }) {
  return (
    <div className="flex h-[16.850px] items-start tracking-[-0.200px]">
      <span className="w-[105px] pt-[3px] leading-[11px] whitespace-nowrap">{label}</span>
      <span
        className={clsx(
          "flex h-[14px] w-[50px] items-center justify-between pl-[2px] pr-[3px] leading-[10px]",
          unit && "border border-[#dedede] bg-white",
        )}
      >
        {unit}
        {unit && <Chevron className="text-[#666]" />}
      </span>
      <span className="ml-[6px] mt-[1px] h-[12px] w-[67px] border-t border-l border-[#777] pl-px leading-[10px] bg-[#f0f0f0]">{value}</span>
      <span className="ml-[2px] flex h-[13px] w-[19px] border border-[#ddd] bg-white mt-[1px] text-[5.500px] leading-[11px] text-black">
        <span className="flex-1 border-r border-[#ddd] text-center">◀</span>
        <span className="flex-1 text-center">▶</span>
      </span>
      {!plain && (
        <span className="ml-[4px] mt-[1px] h-[13px] w-[11px] rounded-xs border border-[#d9d9d9] bg-white text-center leading-[11px] text-[#4e1024]">E</span>
      )}
    </div>
  );
}

function WideButton({ icon, children }: { icon: string; children: ReactNode }) {
  return (
    <button className="flex h-[17px] w-[218px] items-center border-r border-b border-[#666] pl-[4px] pr-[4px] shadow-[inset_1px_1px_0_#fafafa]">
      <Icon name={icon} className="size-[10px] -mr-[10px]" />
      <span className="relative flex-1 text-center whitespace-nowrap">{children}</span>
    </button>
  );
}

function PreferencesDialog() {
  return (
    <div className="absolute left-[426px] top-[216px] z-20 flex h-[248px] w-[428px] flex-col rounded-[7px] border border-[#aab3c2] bg-[#f0f0f0] pl-[10px] text-[8.100px] leading-[10px] tracking-[-0.410px] text-[#111] shadow-[0_10px_26px_5px_rgba(40,60,100,0.38)]">
      <div className="-ml-[10px] flex h-[21px] items-center rounded-t-[7px] bg-[#f3f3f3] pl-[5px]">
        <Icon name="dlgApp" className="size-[12px]" />
        <h2 className="ml-[3px] w-[348px] text-[9px] tracking-[-0.280px] whitespace-nowrap">Preferencias para el proyecto</h2>
        <span className="w-[12px] text-center text-[9.500px]">?</span>
        <svg viewBox="0 0 9 9" className="ml-[24px] size-[9px]" stroke="#111">
          <path d="M1 1l7 7M8 1L1 8" />
        </svg>
      </div>
      <div className="mt-[6px] flex h-[15px] items-center">
        <Icon name="dlgOpen" className="ml-[3px] size-[12px]" />
        <Icon name="dlgSave" className="ml-[4px] size-[12px]" />
        <Icon name="dlgX" className="ml-[5px] size-[11px]" />
        <Icon name="dlgStar" className="ml-[5px] size-[12px]" />
        <div className="ml-[41px] flex h-[15px] w-[298px] items-center justify-between border border-[#adadad] bg-white pl-[3px] pr-[3px] tracking-[-0.200px]">
          DEFAULTS
          <Chevron className="text-[#666]" />
        </div>
      </div>
      <div className="mt-[4px] flex">
        <SettingsTree />
        <div className="ml-[10px] mt-[5px] h-[149px] w-[289px] border border-l-[#dedede] border-t-[#e4e4e4] border-r-[#777] border-b-[#777] pl-[15px] pt-[7px]">
          {settings.map((row) => (
            <SettingsRow key={row.label} {...row} />
          ))}
        </div>
      </div>
      <div className="mt-[2px] flex">
        <div className="flex flex-col gap-[4px]">
          <WideButton icon="dlgLoad">
            Cargar los <u>p</u>arámetros predeterminados
          </WideButton>
          <WideButton icon="dlgStore">
            <u>G</u>uardar los parámetros actuales como predeterminados
          </WideButton>
        </div>
        <div className="ml-[20px] mt-[20px] flex gap-[5px] tracking-[-0.250px]">
          <button className="h-[17px] w-[52px] rounded-xs border border-[#4297b5] bg-white">OK</button>
          <button className="h-[17px] w-[52px] rounded-xs border border-[#dcdcdc] bg-white">Cancelar</button>
          <button className="h-[17px] w-[52px] rounded-xs border border-[#dcdcdc] bg-white">Ayuda</button>
        </div>
      </div>
    </div>
  );
}

function Taskbar() {
  return (
    <footer className="flex h-[36px] items-center bg-[#1c1c1c] text-white">
      <svg viewBox="0 0 22 24" className="ml-[15px] w-[22px] h-[24px] shrink-0">
        <path d="M1 15c5 2 10-1 11-6 6 3 4 13-4 13-4 0-6-3-7-7z" fill="#f0a030" />
        <circle cx="14" cy="7" r="6" fill="#f08fa8" />
        <text x="14" y="10.500" fontSize="9" textAnchor="middle" fill="#3b1020">1</text>
      </svg>
      <div className="ml-[1px] w-[345px] text-[9.300px] leading-[12px] tracking-[-0.350px]">
        <p>19°C</p>
        <p className="text-[#c4c4c4]">Despejado</p>
      </div>
      <svg viewBox="0 0 18 18" className="w-[18px] h-[18px] shrink-0" fill="#42c0f2">
        <path d="M0 0h8.500v8.500H0zM9.500 0H18v8.500H9.500zM0 9.500h8.500V18H0zM9.500 9.500H18V18H9.500z" />
      </svg>
      <div className="ml-[11px] flex h-[24px] w-[164px] shrink-0 items-center rounded-full border border-[#4b4b4b] bg-[#3a3a3a] pl-[7px]">
        <svg viewBox="0 0 14 14" className="size-[13px]" fill="none" stroke="#fff" strokeWidth="1.300">
          <circle cx="6" cy="6" r="4.500" />
          <path d="M9.500 9.500L13 13" />
        </svg>
        <span className="ml-[6px] w-[96px] text-[10px] tracking-[-0.200px] text-[#d4d4d4]">Buscar</span>
        <svg viewBox="0 0 38 22" className="w-[37px] h-[21px]">
          <path d="M2 17c8 3 24 3 34-3" stroke="#87a558" strokeWidth="2" fill="none" />
          <path d="M3 14l3 4M8 19l3-4M30 17l5 2M33 10l2 6" stroke="#9bab62" strokeWidth="2" />
          <path d="M21 14c-2-5 1-11 7-11 6 1 6 9 1 11z" fill="#a8552b" />
          <path d="M8 7l2-2 1 2c3 0 8 2 11 4l2 4H14l-2-4c-2 0-4-1-4-4z" fill="#c4763e" />
          <path d="M24 6c3-1 5 2 3 5" stroke="#d38a55" fill="none" />
          <circle cx="5" cy="17" r="2" fill="#bdb06a" />
          <circle cx="14" cy="19" r="2" fill="#a9a05c" />
        </svg>
      </div>
      <svg viewBox="0 0 20 18" className="ml-[9px] w-[19px] h-[17px] shrink-0">
        <path d="M5 1h14v11H5z" fill="#f4f4f4" />
        <path d="M1 6h12v11H1z" fill="#858585" opacity="0.900" />
      </svg>
      <svg viewBox="0 0 18 18" className="ml-[14px] w-[18px] h-[18px] shrink-0">
        <path d="M5 1h7l-3 12H4c-5-1-3-11 1-12z" fill="#2893e8" />
        <path d="M9 1h3c2 0 2 3 3 4l-5 1z" fill="#3651d4" />
        <path d="M12 5h3c4 1 2 10-2 12H6l3-5z" fill="#e85a96" />
        <path d="M3 12h6l-1 5c-4 0-4-2-5-5z" fill="#f2bd3e" />
        <path d="M8.500 6h3L9.500 12h-3z" fill="#1c1c1c" />
      </svg>
      <svg viewBox="0 0 20 18" className="ml-[14px] w-[20px] h-[18px] shrink-0">
        <path d="M1 2h6l2 2h10v13H1z" fill="#f5c23c" />
        <path d="M1 6h18v11H1z" fill="#ffd65a" />
        <path d="M4 12h12v5H4z" fill="#2684cf" />
      </svg>
      <svg viewBox="0 0 18 18" className="ml-[14px] w-[19px] h-[19px] shrink-0">
        <circle cx="9" cy="9" r="8.500" fill="#1676c8" />
        <path d="M1 8C2-2 17-2 17.500 8c0 4-5 5-7 3 2-5-5-7-9.500-3z" fill="#38cf9d" />
        <path d="M6 10c0 5 5 6 10 4-3 4-8 4-11 1-3-4 0-8 3-7-1 0-2 1-2 2z" fill="#0b4d9a" />
      </svg>
      <svg viewBox="0 0 20 20" className="ml-[13px] w-[19px] h-[19px] shrink-0">
        <path d="M1 1h14v14H1z" fill="#efe9ea" />
        <path d="M4 4h8v8H4z" fill="none" stroke="#c8342c" strokeWidth="1.500" strokeDasharray="1.800 1.200" />
        <path d="M18 8l-7 8M10 11l6 5" stroke="#65b8e3" strokeWidth="1.500" />
        <circle cx="10" cy="17" r="1.800" fill="none" stroke="#3894d0" strokeWidth="1.300" />
        <circle cx="17" cy="17" r="1.800" fill="none" stroke="#3894d0" strokeWidth="1.300" />
      </svg>
      <div className="ml-[9px] flex h-[32px] w-[30px] shrink-0 flex-col items-center justify-end rounded-sm bg-[#2b2b2b]">
        <RobotLogo className="w-[17px] h-[19px]" />
        <span className="mt-[3px] mb-[1px] h-[2px] w-[12px] rounded-full bg-[#5cb8ea]" />
      </div>
      <svg viewBox="0 0 10 6" className="ml-[116px] w-[9px] h-[6px] shrink-0" fill="none" stroke="#fff" strokeWidth="1.300">
        <path d="M1 5l4-4 4 4" />
      </svg>
      <svg viewBox="0 0 16 12" className="ml-[14px] w-[13px] h-[11px] shrink-0">
        <path d="M3 11c-4-1-2-6 1-6 2-4 7-3 7 1 5-1 5 5 2 5z" fill="#9b9b9b" />
        <path d="M2 1l13 10" stroke="#ddd" strokeWidth="1.300" />
      </svg>
      <Speaker className="ml-[10px] text-[#a8a8a8]" />
      <svg viewBox="0 0 10 14" className="ml-[13px] w-[9px] h-[12px] shrink-0" fill="none" stroke="#79b6bd" strokeWidth="1.200">
        <rect x="3" y="1" width="4" height="8" rx="2" />
        <path d="M1 6c0 7 8 7 8 0M5 11v3" />
      </svg>
      <span className="ml-[16px] w-[17px] text-[8.800px] tracking-[-0.100px]">ESP</span>
      <svg viewBox="0 0 14 11" className="ml-[13px] w-[13px] h-[11px] shrink-0" fill="none" stroke="#eee" strokeWidth="1.200">
        <path d="M1 4c4-4 8-4 12 0M3 6.500c3-3 5-3 8 0M5 8.500c1.500-1.500 2.500-1.500 4 0" />
        <circle cx="7" cy="10" r=".6" />
      </svg>
      <Speaker className="ml-[4px] text-[#ddd]" />
      <svg viewBox="0 0 14 11" className="ml-[6px] w-[13px] h-[10px] shrink-0">
        <path d="M4 2.500h8v7H2" fill="none" stroke="#eee" />
        <path d="M12 5h1.500v2H12z" fill="#eee" />
        <path d="M1 10V4c1-4 6-2 5 1l-2 5z" fill="#eee" />
      </svg>
      <div className="w-[53px] text-right text-[9px] leading-[12px] tracking-[-0.200px]">
        <p>20:04</p>
        <p>9/09/2025</p>
      </div>
      <svg viewBox="0 0 12 13" className="ml-[7px] w-[11px] h-[12px] shrink-0">
        <path d="M1 10l1-2V4c0-4 8-4 8 0v4l1 2z" fill="#eee" />
        <path d="M4 11h4v1.500H4z" fill="#eee" />
        <path d="M5 4h2.500L5 7h2.500" stroke="#333" fill="none" />
      </svg>
    </footer>
  );
}

function Speaker({ className }: { className?: string }) {
  return (
    <svg viewBox="0 0 14 12" className={clsx("w-[13px] h-[11px] shrink-0", className)} fill="none" stroke="currentColor" strokeWidth="1.100">
      <path d="M1 4.500h2L6 2v8L3 7.500H1z" />
      <path d="M8 4c1 1 1 3 0 4" />
      <path d="M10 2.500c2 2 2 5 0 7" opacity="0.500" />
      <path d="M12 1c2.500 3 2.500 7 0 10" opacity="0.350" />
    </svg>
  );
}

export default function App() {
  return (
    <div className="h-[720px] w-[1280px] overflow-hidden bg-black px-[64px] font-['Open_Sans',sans-serif]">
      <div className="flex h-[720px] flex-col bg-white">
        <TitleBar />
        <MenuBar />
        <MainToolbar />
        <SelectionToolbar />
        <div className="flex h-[576px] border-b border-[#cfcfcf]">
          <ObjectInspector />
          <div className="flex w-[951px] flex-col">
            <div className="flex">
              <Viewport />
              <div className="h-[563px] w-[13px] bg-[#f0f0f0] pl-[5px] pt-[213px]">
                <div className="h-[138px] w-[2px] bg-[#8a8a8a]" />
              </div>
            </div>
            <ViewportFooter />
          </div>
          <SideToolbar />
        </div>
        <div className="flex h-[15px] border-b border-[#d6d6d6] bg-[#f0f0f0] pt-[2px] pl-[1px]">
          <span className="h-[11px] w-[29px] bg-white pl-[1px] font-['Liberation_Sans'] text-[8.500px] leading-[12px]">Vista</span>
        </div>
        <div className="h-[16px] bg-[#f0f0f0]" />
        <Taskbar />
      </div>
      <PreferencesDialog />
      <svg viewBox="0 0 8 12" className="absolute left-[944px] top-[346px] w-[8px] h-[12px]" fill="#fff" stroke="#222" strokeWidth="0.800">
        <path d="M1 1v8.500l2-2 1.500 3.500 1.500-.7L4.700 7H7.300z" />
      </svg>
    </div>
  );
}
